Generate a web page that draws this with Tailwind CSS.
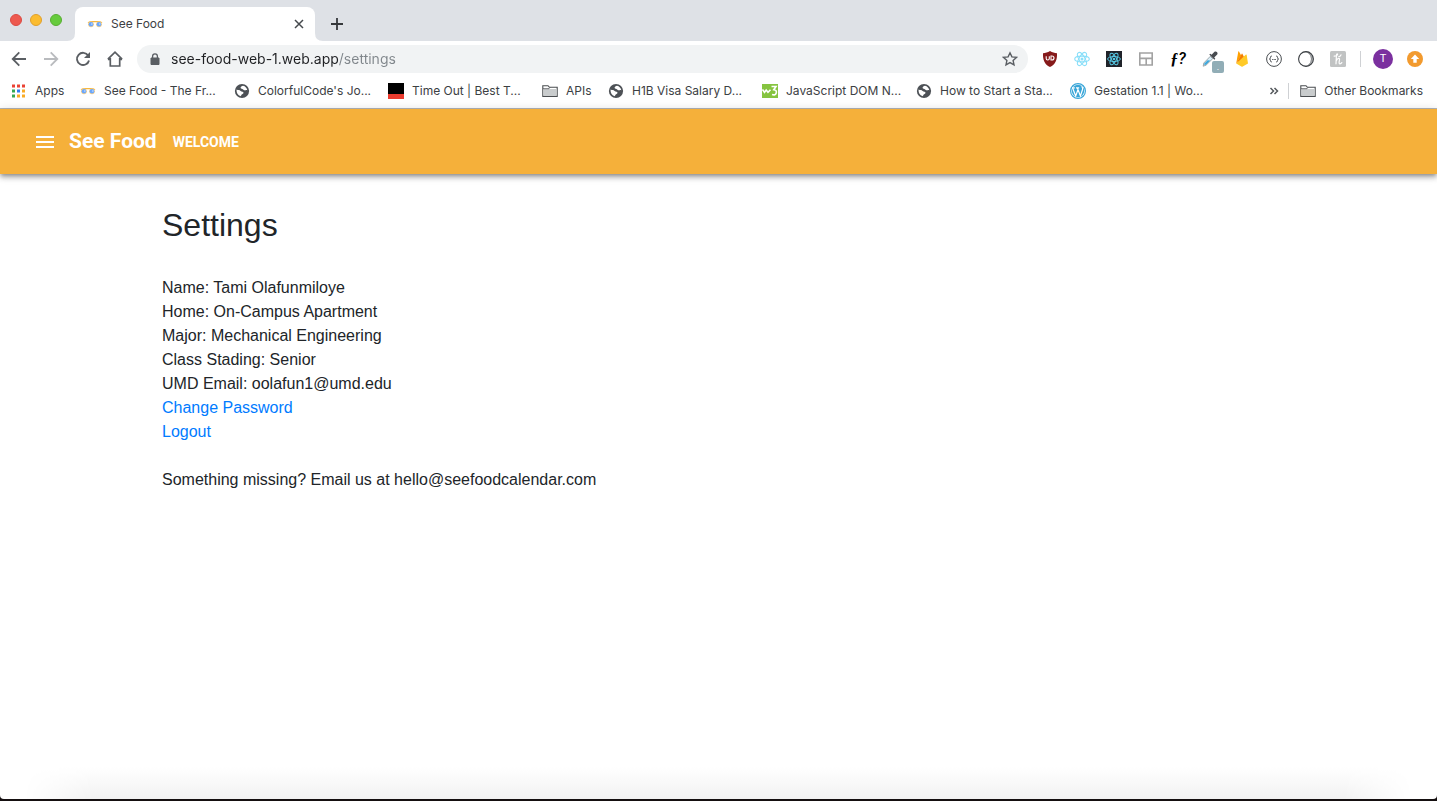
<!DOCTYPE html>
<html lang="en">
<head>
<meta charset="utf-8">
<meta name="viewport" content="width=device-width, initial-scale=1">
<title>See Food</title>
<script src="https://cdn.jsdelivr.net/npm/@tailwindcss/browser@4"></script>
</head>
<body class="flex min-h-screen flex-col bg-[#150f10] font-['Inter','Liberation_Sans',sans-serif] text-[#3c4043]">

<svg class="hidden" aria-hidden="true">
  <symbol id="glasses" viewBox="0 0 16 16">
    <path d="M1.2 7Q2 5.600 4 5.600H12Q14 5.600 14.800 7" fill="none" stroke="#f6b73f" stroke-width="1.400"/>
    <circle cx="4" cy="8.300" r="2.900" fill="#fbd28a"/>
    <circle cx="12" cy="8.300" r="2.900" fill="#fbd28a"/>
    <circle cx="4" cy="8.300" r="2.300" fill="#6aa6fb"/>
    <circle cx="12" cy="8.300" r="2.300" fill="#6aa6fb"/>
    <circle cx="4.800" cy="8" r=".9" fill="#a9cdfd"/><circle cx="12.800" cy="8" r=".9" fill="#a9cdfd"/>
  </symbol>
  <symbol id="globe" viewBox="0 0 16 16">
    <circle cx="8" cy="8" r="7.1" fill="#4d5156"/>
    <path d="M2.6 6.6C4 7.4 5.6 7 6.6 7.9C7.6 8.8 9.4 8.2 9.5 9.7C9.6 11 7.6 10.8 7.2 12.2L7 13.2C4.2 12.8 2.3 10.2 2.6 6.6Z" fill="#fff"/>
    <path d="M9 2.7C8 3.2 6.3 3.6 6.6 5C6.9 6 8.4 5.7 9.1 6.4C10 7.2 11 7.6 11.8 7.2C12.5 6.9 12.9 7.3 13.3 7.2C13 5.1 11.3 3.2 9 2.7Z" fill="#fff"/>
  </symbol>
  <symbol id="folder" viewBox="0 0 16 16">
    <path d="M.8 13.4V2.7H6L7.4 4.3H15.2V13.4Z" fill="#fff" stroke="#4a4d50" stroke-width="1.1"/>
    <path d="M1.4 6H14.6V12.8H1.4Z" fill="#c9cccd"/>
    <path d="M1 5.7H7L8 4.5" fill="none" stroke="#4a4d50" stroke-width=".8"/>
  </symbol>
  <symbol id="atom" viewBox="0 0 16 16">
    <g fill="none" stroke="currentColor" stroke-width="1.1">
      <ellipse cx="8" cy="8" rx="7.3" ry="2.9"/>
      <ellipse cx="8" cy="8" rx="7.3" ry="2.9" transform="rotate(60 8 8)"/>
      <ellipse cx="8" cy="8" rx="7.3" ry="2.9" transform="rotate(120 8 8)"/>
    </g>
    <circle cx="8" cy="8" r="1.5" fill="currentColor"/>
  </symbol>
</svg>

<div class="mb-0.5 flex grow flex-col overflow-hidden rounded-b-sm bg-white">
  <!-- Tab strip -->
  <div class="flex h-[41px] shrink-0 items-end bg-[#dee1e6]">
    <div class="flex w-[67px] gap-2 self-start pt-3.5 pl-2.5">
      <button aria-label="Close window" class="size-3 rounded-full border border-[#dc4a42] bg-[#ed594f]"></button>
      <button aria-label="Minimise window" class="size-3 rounded-full border border-[#e0a02c] bg-[#fbbc30]"></button>
      <button aria-label="Zoom window" class="size-3 rounded-full border border-[#58ae32] bg-[#66cb3d]"></button>
    </div>
    <svg class="size-2 shrink-0" viewBox="0 0 8 8"><path d="M8 0V8H0Q8 8 8 0Z" fill="#fff"/></svg>
    <div class="flex h-[34px] w-60 items-center rounded-t-lg bg-white pr-2 pl-3">
      <svg class="size-4"><use href="#glasses"/></svg>
      <span class="ml-2 grow text-xs">See Food</span>
      <button aria-label="Close tab" class="grid size-4 place-items-center">
        <svg class="size-4" viewBox="0 0 16 16"><path d="M4 4L12 12M12 4L4 12" stroke="#45494d" stroke-width="1.5"/></svg>
      </button>
    </div>
    <svg class="size-2 shrink-0" viewBox="0 0 8 8"><path d="M0 0V8H8Q0 8 0 0Z" fill="#fff"/></svg>
    <button aria-label="New tab" class="mb-[9px] ml-1.5 grid size-4 place-items-center">
      <svg class="size-4" viewBox="0 0 16 16"><path d="M8 2V14M2 8H14" stroke="#35383b" stroke-width="1.8"/></svg>
    </button>
  </div>

  <!-- Toolbar -->
  <div class="flex h-9 shrink-0 items-center pr-3.5 pl-[11px]">
    <div class="flex gap-4 text-[#5a5e63]">
      <button aria-label="Back"><svg class="size-4" viewBox="0 0 16 16" fill="none" stroke="currentColor" stroke-width="1.8"><path d="M15 8H2M8.3 1.4L1.7 8L8.3 14.6"/></svg></button>
      <button aria-label="Forward" class="text-[#b9bbbe]"><svg class="size-4" viewBox="0 0 16 16" fill="none" stroke="currentColor" stroke-width="1.8"><path d="M1 8H14M7.7 1.4L14.3 8L7.7 14.6"/></svg></button>
      <button aria-label="Reload"><svg class="size-4" viewBox="0 0 16 16"><path d="M13.2 4.6A6.1 6.1 0 1 0 14 9.4" fill="none" stroke="currentColor" stroke-width="1.9"/><path d="M15 1V7H9Z" fill="currentColor"/></svg></button>
      <button aria-label="Home"><svg class="size-4" viewBox="0 0 16 16"><path d="M.9 8.2L8 1.2L15.1 8.2M3.3 7V15H12.7V7M.9 8.5H3.3M12.7 8.5H15.1" fill="none" stroke="currentColor" stroke-width="1.7"/></svg></button>
    </div>
    <div class="ml-3.5 flex h-7 grow items-center rounded-full bg-[#f1f3f4] pr-2.5 pl-3">
      <svg class="size-3 shrink-0" viewBox="0 0 12 12"><path d="M2 5H10V11.5H2Z" fill="#5a5e63" stroke="#5a5e63" stroke-linejoin="round"/><path d="M3.6 5V3.2A2.4 2.4 0 0 1 8.4 3.2V5" fill="none" stroke="#5a5e63" stroke-width="1.3"/></svg>
      <!-- The host part of the address is dark, the path after it grey -->
      <input type="text" aria-label="Address" value="see-food-web-1.web.app/settings" class="ml-2.5 h-5 min-w-0 grow bg-linear-to-r from-[#202124] from-[168px] to-[#80868b] to-[168px] bg-clip-text text-sm text-transparent caret-black outline-none">
      <button aria-label="Bookmark this page"><svg class="size-4" viewBox="0 0 16 16"><path d="M8 1.8L9.9 5.9L14.4 6.4L11.1 9.4L12 13.8L8 11.6L4 13.8L4.9 9.4L1.6 6.4L6.1 5.9Z" fill="none" stroke="#5a5e63" stroke-width="1.4"/></svg></button>
    </div>
    <div class="ml-3.5 flex shrink-0 items-center gap-4">
      <button aria-label="Content blocker"><svg class="size-4" viewBox="0 0 16 16"><path d="M8 0C10.4 1.4 12.5 2 15 2.2C15.3 9 13.6 13.1 8 16C2.4 13.1.7 9 1 2.2C3.500 2 5.6 1.400 8 0Z" fill="#861a1b"/><path d="M4.200 5.200V7.500Q4.200 9 5.700 9Q7.300 9 7.300 7.500V5.200M9 5H9.800Q12 5 12 7Q12 9 9.800 9H9Z" fill="none" stroke="#fff" stroke-width="1.100"/></svg></button>
      <button aria-label="React tools" class="text-[#8adff9]"><svg class="size-4"><use href="#atom"/></svg></button>
      <button aria-label="React developer tools" class="size-4 bg-[#20232a] p-px text-[#56c8e3]"><svg class="size-3.5"><use href="#atom"/></svg></button>
      <button aria-label="Layout"><svg class="size-4" viewBox="0 0 16 16"><path d="M1.800 2H14.200V14H1.800ZM2 7.400H14M8.200 7.400V14" fill="none" stroke="#a2a2a2" stroke-width="1.600"/></svg></button>
      <button aria-label="What font" class="flex w-4 justify-center text-base leading-4 font-medium whitespace-nowrap text-black italic"><span class="font-['Liberation_Serif',serif] font-bold">ƒ</span><span class="font-['Roboto',sans-serif]">?</span></button>
      <button aria-label="Colour picker" class="relative size-4">
        <svg class="size-4" viewBox="0 0 16 16"><path d="M8.300 5.300L10.700 7.700L4 14.200L1.200 15.200L1.800 12Z" fill="#d8eef8" stroke="#8a9499" stroke-width=".8"/><path d="M5.600 9.200L8.200 9.500L3.900 13.700L2.200 14L2.600 12.200Z" fill="#39a6dc"/><path d="M7.300 3.600L12.400 8.700L13.300 7.700L12.200 6.400L15.200 3.600C16.400 1.800 14.300-.3 12.500.8L9.600 3.800L8.300 2.700Z" fill="#474b50"/></svg>
        <span class="absolute top-2.5 left-2.5 grid size-3 place-items-center rounded-xs bg-[#91adb6] text-[8px] leading-3 text-white">.</span>
      </button>
      <button aria-label="Firebase"><svg class="size-4" viewBox="0 0 16 16"><path d="M2.200 12.500L4.300.6Q4.600 0 5 .6L7.200 4.500Z" fill="#ffa000"/><path d="M2.200 12.500L7.800 2.800Q8.200 2.300 8.500 2.900L10.500 7Z" fill="#f57c00"/><path d="M2.200 12.500L12 3.600Q12.500 3.200 12.700 3.900L14 12.500L8.700 15.600Q8 16 7.400 15.600Z" fill="#ffca28"/></svg></button>
      <button aria-label="JSON viewer"><svg class="size-4" viewBox="0 0 16 16" fill="none" stroke="#4a4e52"><circle cx="8" cy="8" r="7.400"/><path d="M5.800 5Q4.500 5 4.500 6.300Q4.500 8 3.400 8Q4.500 8 4.500 9.700Q4.500 11 5.800 11M10.200 5Q11.500 5 11.500 6.300Q11.500 8 12.600 8Q11.500 8 11.500 9.700Q11.500 11 10.200 11"/><path d="M6.200 8.500H10" stroke-dasharray="1 .5"/></svg></button>
      <button aria-label="Dark mode"><svg class="size-4" viewBox="0 0 16 16"><circle cx="8" cy="8" r="7.400" fill="#b4b6b8"/><circle cx="7" cy="8" r="6.600" fill="#fff"/><path d="M10 1.300Q13.500 4 13.500 8Q13.500 12 10 14.700" fill="none" stroke="#6a6d70" stroke-width=".8"/><circle cx="8" cy="8" r="7.400" fill="none" stroke="#3a3e42" stroke-width="1.100"/></svg></button>
      <button aria-label="Shopping helper"><svg class="size-4" viewBox="0 0 16 16"><rect width="16" height="16" rx="1.500" fill="#c1c3c3"/><path d="M4.200 5.200Q7.800 4.600 7.600 3.200Q6.600 2.200 6.400 5L6 12.800M6.200 10Q7.400 7 9.200 7.400Q10 7.800 9.200 10.500Q8.800 13 10 12.900Q11 12.800 11.800 11.600M8.800 5.600Q10.600 5.400 11 3.800" fill="none" stroke="#fff" stroke-width="1.200" stroke-linecap="round"/></svg></button>
    </div>
    <div class="ml-3.5 h-4 w-px shrink-0 bg-[#cfd1d4]"></div>
    <button aria-label="Profile" class="ml-3 grid size-5 shrink-0 place-items-center rounded-full bg-[#7b309f] font-['Roboto',sans-serif] text-[11px] text-white">T</button>
    <button aria-label="Update" class="ml-3.5 shrink-0"><svg class="size-4" viewBox="0 0 16 16"><circle cx="8" cy="8" r="8" fill="#f29a2e"/><path d="M8 3.600L12.200 8H9.700V11.700H6.300V8H3.800Z" fill="#fff"/></svg></button>
  </div>

  <!-- Bookmarks bar -->
  <nav aria-label="Bookmarks" class="flex h-8 shrink-0 items-center border-b border-[#b4b6b9] pr-3.5 pb-1 pl-[11px] text-xs whitespace-nowrap">
    <a href="#" class="flex w-[69px] items-center gap-2"><svg class="size-4 shrink-0" viewBox="0 0 16 16"><path d="M1 1.500H4V4.500H1ZM6 1.500H9V4.500H6ZM11 1.500H14V4.500H11Z" fill="#ea4335"/><path d="M1 6.500H4V9.500H1ZM1 11.500H4V14.500H1Z" fill="#34a853"/><path d="M6 6.500H9V9.500H6Z" fill="#2f7df4"/><path d="M11 6.500H14V9.500H11ZM11 11.500H14V14.500H11ZM6 11.500H9V14.500H6Z" fill="#f9ab25"/></svg>Apps</a>
    <a href="#" class="flex w-[154px] items-center gap-2"><svg class="size-4 shrink-0"><use href="#glasses"/></svg>See Food - The Fr...</a>
    <a href="#" class="flex w-[154px] items-center gap-2"><svg class="size-4 shrink-0"><use href="#globe"/></svg>ColorfulCode's Jo...</a>
    <a href="#" class="flex w-[154px] items-center gap-2"><svg class="size-4 shrink-0" viewBox="0 0 16 16"><path d="M0 0H16V11H0Z"/><path d="M0 11H16V16H0Z" fill="#ea3b2e"/></svg>Time Out | Best T...</a>
    <a href="#" class="flex w-[66px] items-center gap-2"><svg class="size-4 shrink-0"><use href="#folder"/></svg>APIs</a>
    <a href="#" class="flex w-[154px] items-center gap-2"><svg class="size-4 shrink-0"><use href="#globe"/></svg>H1B Visa Salary D...</a>
    <a href="#" class="flex w-[154px] items-center gap-2"><svg class="size-4 shrink-0" viewBox="0 0 16 16"><path d="M0 1H16V15H0Z" fill="#86c440"/><path d="M.5 6.500L2.500 9.300L4.200 7L6 9.300L8.500 6.700M9.500 3.500H14L11.800 6.700Q15 7 14.200 10Q13.500 12.600 10 11.500" fill="none" stroke="#fff" stroke-width="1.600"/></svg>JavaScript DOM N...</a>
    <a href="#" class="flex w-[154px] items-center gap-2"><svg class="size-4 shrink-0"><use href="#globe"/></svg>How to Start a Sta...</a>
    <a href="#" class="flex items-center gap-2"><svg class="size-4 shrink-0" viewBox="0 0 16 16"><circle cx="8" cy="8" r="7.400" fill="#fff" stroke="#3aa6d8" stroke-width="1.200"/><circle cx="8" cy="8" r="6.200" fill="#3aa6d8"/><path d="M2.600 5L5.700 13L8 6.500L10.400 13L12.600 6.300Q13 4.500 11.500 3.600M2 4.800H4.800M6 4.800H9.200M7.300 4.800L8 6.500" fill="none" stroke="#fff" stroke-width="1.200"/></svg>Gestation 1.1 | Wo...</a>
    <button aria-label="More bookmarks" class="ml-auto"><svg class="size-4" viewBox="0 0 16 16"><path d="M4.500 5L7.500 8L4.500 11M8.500 5L11.500 8L8.500 11" fill="none" stroke="#55595d" stroke-width="1.500"/></svg></button>
    <div class="ml-1.5 h-4 w-px bg-[#cfd1d4]"></div>
    <a href="#" class="ml-[11px] flex items-center gap-2"><svg class="size-4 shrink-0"><use href="#folder"/></svg>Other Bookmarks</a>
  </nav>

  <!-- App bar -->
  <header class="flex h-[65px] shrink-0 items-center bg-[#f5b03a] pl-[33px] font-['Roboto',sans-serif] text-white shadow-[0_2px_4px_-1px_rgba(0,0,0,0.3),0_4px_5px_rgba(0,0,0,0.18),0_1px_10px_rgba(0,0,0,0.14)]">
    <button aria-label="Menu"><svg class="size-6" viewBox="0 0 24 24"><path d="M3 18h18v-2H3zm0-5h18v-2H3zm0-7v2h18V6z" fill="currentColor"/></svg></button>
    <a href="#" class="ml-3 text-[21px] font-bold">See Food</a>
    <a href="#" class="ml-4 text-sm font-bold">WELCOME</a>
  </header>

  <!-- Settings -->
  <main class="mx-auto w-full max-w-[1141px] grow px-3.5 pt-8 font-['Liberation_Sans',sans-serif] text-base text-[#212529]">
    <h1 class="mb-8 text-[32px] leading-[38px]">Settings</h1>
    <p>Name: Tami Olafunmiloye</p>
    <p>Home: On-Campus Apartment</p>
    <p>Major: Mechanical Engineering</p>
    <p>Class Stading: Senior</p>
    <p>UMD Email: oolafun1@umd.edu</p>
    <p><a href="#" class="text-[#007bff]">Change Password</a></p>
    <p><a href="#" class="text-[#007bff]">Logout</a></p>
    <p class="mt-6">Something missing? Email us at hello@seefoodcalendar.com</p>
  </main>
  <div class="mx-6 h-8 shrink-0 bg-linear-to-b from-white to-[#f2f2f2] mask-x-from-95%"></div>
</div>
</body>
</html>
